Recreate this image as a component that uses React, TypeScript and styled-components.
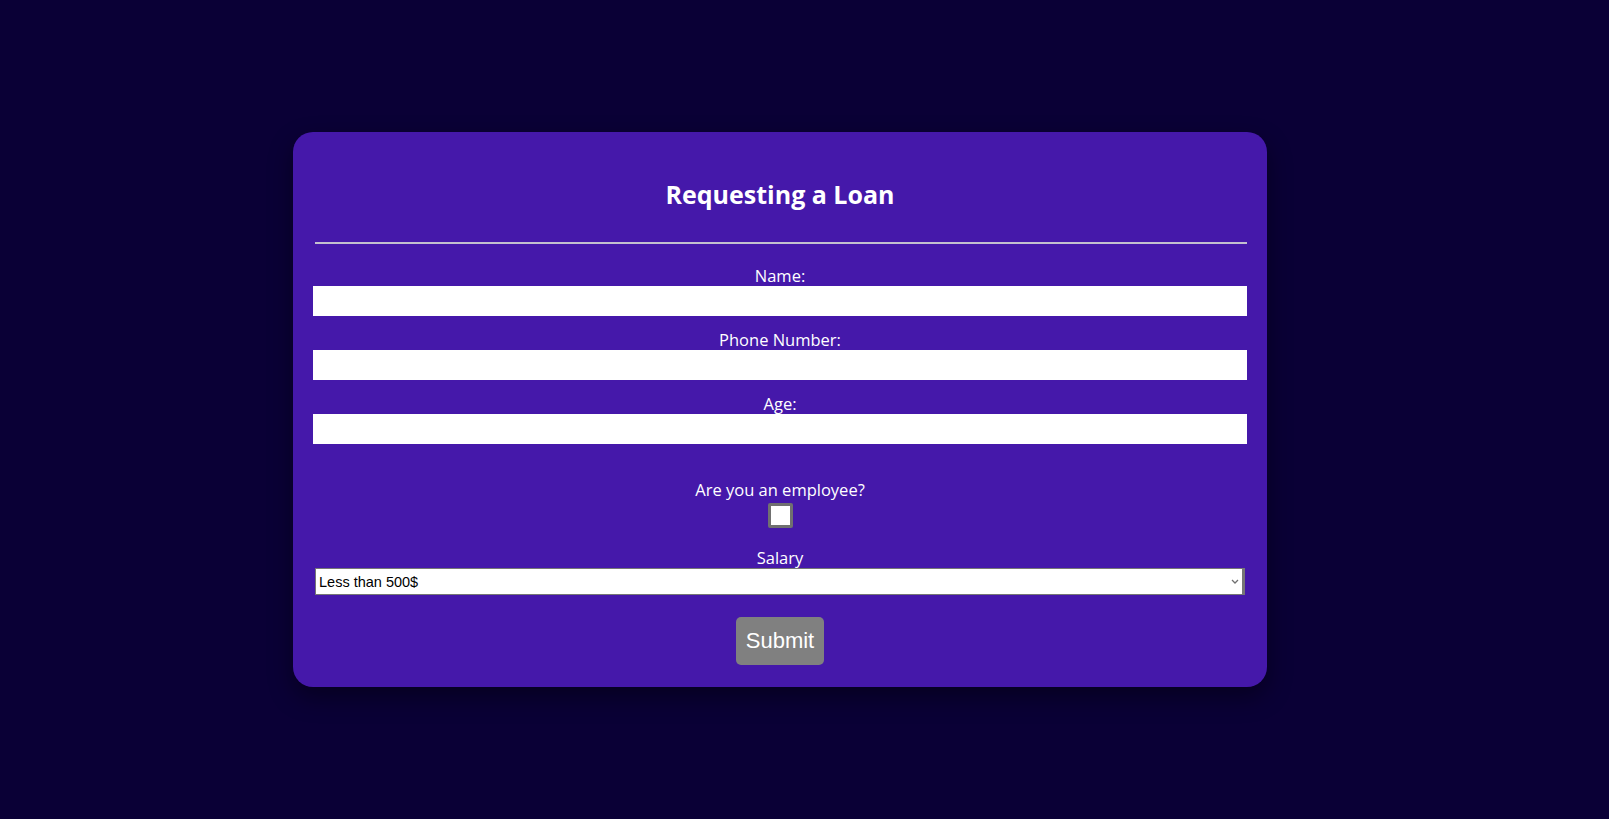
import styled, { createGlobalStyle } from 'styled-components';

const GlobalStyle = createGlobalStyle`
  html, body {
    margin: 0;
    padding: 0;
    background: #0a0036;
  }
  body {
    font-family: 'Open Sans', 'Noto Sans', sans-serif;
  }
`;

const Page = styled.div`
  min-height: 819px;
  padding: 132px 0 0 293px;
  box-sizing: border-box;
  background: #0a0036;
`;

const Card = styled.form`
  width: 974px;
  box-sizing: border-box;
  padding: 46px 20px 22px;
  background: #4518aa;
  border-radius: 20px;
  box-shadow: 0 10px 24px rgba(0, 0, 0, 0.4);
  display: flex;
  flex-direction: column;
  color: #fff;
`;

const Title = styled.h2`
  margin: 0;
  font-size: 25px;
  line-height: 33px;
  font-weight: 700;
  text-align: center;
`;

const Divider = styled.hr`
  margin: 31px 0 0 2px;
  border: 0;
  height: 2px;
  background: #c4c0cf;
`;

const Fields = styled.div`
  margin-top: 18px;
  display: flex;
  flex-direction: column;
  gap: 10px;
`;

const Field = styled.div`
  display: flex;
  flex-direction: column;
`;

const Label = styled.label<{ $top?: number }>`
  display: block;
  margin-top: ${p => p.$top ?? 0}px;
  padding-top: 4px;
  font-size: 16.5px;
  line-height: 20px;
  text-align: center;
`;

const TextInput = styled.input`
  display: block;
  width: 100%;
  height: 30px;
  box-sizing: border-box;
  border: 0;
  padding: 0 4px;
  background: #fff;
  outline: none;
`;

const Check = styled.input`
  appearance: none;
  margin: 3px auto 0;
  width: 25px;
  height: 25px;
  box-sizing: border-box;
  border: 3px solid #707070;
  border-radius: 2px;
  background: #fff;
`;

const SelectWrap = styled.div`
  position: relative;
  margin: 0 2px;
`;

const Select = styled.select`
  appearance: none;
  display: block;
  width: 100%;
  height: 27px;
  box-sizing: border-box;
  border: 1px solid #767676;
  border-right-width: 3px;
  border-radius: 0;
  padding: 0 0 0 3px;
  background: #fff;
  color: #000;
  font-family: 'Liberation Sans', Arial, sans-serif;
  font-size: 14.5px;
  outline: none;
`;

const Chevron = styled.svg`
  position: absolute;
  right: 6px;
  top: 11px;
  pointer-events: none;
`;

const Submit = styled.button`
  align-self: center;
  margin-top: 22px;
  padding: 11px 10px 12px;
  border: 0;
  border-radius: 5px;
  background: #808080;
  color: #fff;
  font-family: 'Liberation Sans', Arial, sans-serif;
  font-size: 22px;
  line-height: 25px;
  cursor: pointer;
`;

const fields = [
  { id: 'name', label: 'Name:' },
  { id: 'phone', label: 'Phone Number:' },
  { id: 'age', label: 'Age:' },
];

export default function App() {
  return (
    <Page>
      <GlobalStyle />
      <Card onSubmit={e => e.preventDefault()}>
        <Title>Requesting a Loan</Title>
        <Divider />
        <Fields>
          {fields.map(f => (
            <Field key={f.id}>
              <Label htmlFor={f.id}>{f.label}</Label>
              <TextInput id={f.id} type="text" />
            </Field>
          ))}
        </Fields>
        <Label htmlFor="employee" $top={32}>Are you an employee?</Label>
        <Check id="employee" type="checkbox" />
        <Label htmlFor="salary" $top={16}>Salary</Label>
        <SelectWrap>
          <Select id="salary" defaultValue="lt500">
            <option value="lt500">Less than 500$</option>
            <option value="500-1000">500$ - 1000$</option>
            <option value="gt1000">More than 1000$</option>
          </Select>
          <Chevron width="8" height="5" viewBox="0 0 8 5">
            <path d="M1 1l3 3 3-3" fill="none" stroke="#707070" strokeWidth="1.3" />
          </Chevron>
        </SelectWrap>
        <Submit type="submit">Submit</Submit>
      </Card>
    </Page>
  );
}
